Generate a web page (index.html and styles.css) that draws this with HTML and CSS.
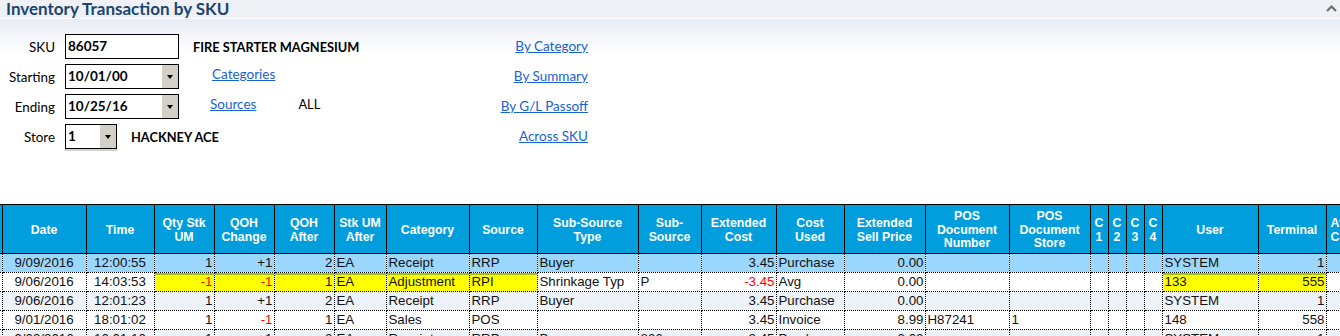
FILE: index.html
```html
<!DOCTYPE html>
<html>
<head>
<meta charset="utf-8">
<link rel="stylesheet" href="styles.css">
</head>
<body>
<div class="titlebar">
  <h1 class="title">Inventory Transaction by SKU</h1>
  <svg class="collapse" width="11" height="8" viewBox="0 0 11 8"><polyline points="1,7 5.5,2.5 10,7" fill="none" stroke="#6f6f6f" stroke-width="2.2"/></svg>
</div>
<div class="panel">
  <div class="form">
    <div class="fields">
      <div class="row">
        <span class="label">SKU</span>
        <div class="box box-sku"><span class="val">86057</span></div>
        <span class="desc desc-sku">FIRE STARTER MAGNESIUM</span>
      </div>
      <div class="row">
        <span class="label">Starting</span>
        <div class="box box-date"><span class="val">10/01/00</span><span class="drop"><i class="arrow"></i></span></div>
        <a class="link link-cat" href="#">Categories</a>
      </div>
      <div class="row">
        <span class="label">Ending</span>
        <div class="box box-date"><span class="val">10/25/16</span><span class="drop"><i class="arrow"></i></span></div>
        <a class="link link-src" href="#">Sources</a>
        <span class="all">ALL</span>
      </div>
      <div class="row">
        <span class="label">Store</span>
        <div class="box box-store"><span class="val">1</span><span class="drop"><i class="arrow"></i></span></div>
        <span class="desc desc-store">HACKNEY ACE</span>
      </div>
    </div>
    <div class="links">
      <a class="link" href="#">By Category</a>
      <a class="link" href="#">By Summary</a>
      <a class="link" href="#">By G/L Passoff</a>
      <a class="link" href="#">Across SKU</a>
    </div>
  </div>
  <table class="grid">
    <colgroup>
      <col class="w2"><col class="w84"><col class="w68"><col class="w60"><col class="w60"><col class="w60"><col class="w52"><col class="w83"><col class="w68"><col class="w101"><col class="w63"><col class="w75"><col class="w68"><col class="w81"><col class="w84"><col class="w81"><col class="w18"><col class="w18"><col class="w18"><col class="w18"><col class="w96"><col class="w68"><col class="w40">
    </colgroup>
    <thead>
      <tr>
        <th class="first"></th>
        <th>Date</th><th>Time</th><th>Qty Stk UM</th><th>QOH Change</th><th>QOH After</th><th class="narrow">Stk UM After</th><th>Category</th><th>Source</th><th>Sub-Source Type</th><th>Sub-<br>Source</th><th>Extended Cost</th><th>Cost Used</th><th>Extended Sell Price</th><th>POS Document Number</th><th>POS Document Store</th><th class="cn">C 1</th><th class="cn">C 2</th><th class="cn">C 3</th><th class="cn">C 4</th><th>User</th><th>Terminal</th><th class="last">Avg Cost</th>
      </tr>
    </thead>
    <tbody>
      <tr class="sel">
        <td class="first"></td>
        <td class="c">9/09/2016</td><td class="c">12:00:55</td><td class="r">1</td><td class="r">+1</td><td class="r">2</td><td>EA</td><td>Receipt</td><td>RRP</td><td>Buyer</td><td></td><td class="r">3.45</td><td>Purchase</td><td class="r">0.00</td><td></td><td></td><td></td><td></td><td></td><td></td><td>SYSTEM</td><td class="r">1</td><td></td>
      </tr>
      <tr>
        <td class="first"></td>
        <td class="c">9/06/2016</td><td class="c">14:03:53</td><td class="r hl neg">-1</td><td class="r hl neg">-1</td><td class="r hl">1</td><td class="hl">EA</td><td class="hl">Adjustment</td><td class="hl">RPI</td><td>Shrinkage Typ</td><td>P</td><td class="r neg">-3.45</td><td>Avg</td><td class="r">0.00</td><td></td><td></td><td></td><td></td><td></td><td></td><td class="hl">133</td><td class="r hl">555</td><td></td>
      </tr>
      <tr class="alt">
        <td class="first"></td>
        <td class="c">9/06/2016</td><td class="c">12:01:23</td><td class="r">1</td><td class="r">+1</td><td class="r">2</td><td>EA</td><td>Receipt</td><td>RRP</td><td>Buyer</td><td></td><td class="r">3.45</td><td>Purchase</td><td class="r">0.00</td><td></td><td></td><td></td><td></td><td></td><td></td><td>SYSTEM</td><td class="r">1</td><td></td>
      </tr>
      <tr>
        <td class="first"></td>
        <td class="c">9/01/2016</td><td class="c">18:01:02</td><td class="r">1</td><td class="r neg">-1</td><td class="r">1</td><td>EA</td><td>Sales</td><td>POS</td><td></td><td></td><td class="r">3.45</td><td>Invoice</td><td class="r">8.99</td><td>H87241</td><td>1</td><td></td><td></td><td></td><td></td><td>148</td><td class="r">558</td><td></td>
      </tr>
      <tr class="alt">
        <td class="first"></td>
        <td class="c">9/02/2016</td><td class="c">10:01:10</td><td class="r">1</td><td class="r">+1</td><td class="r">2</td><td>EA</td><td>Receipt</td><td>RRP</td><td>Buyer</td><td>806</td><td class="r">3.45</td><td>Purchase</td><td class="r">0.00</td><td></td><td></td><td></td><td></td><td></td><td></td><td>SYSTEM</td><td class="r">1</td><td></td>
      </tr>
    </tbody>
  </table>
</div>
</body>
</html>
```

FILE: styles.css
```css
html, body {
  margin: 0;
  padding: 0;
  background: #ffffff;
  overflow: hidden;
  width: 1340px;
  height: 336px;
}

body {
  font-family: "Lato", "Liberation Sans", sans-serif;
  color: #000;
}

.titlebar {
  height: 18px;
  background: #eff1f7;
  border-bottom: 1px solid #ffffff;
  display: flex;
  align-items: center;
  justify-content: space-between;
  padding: 0 3px 0 6px;
}

.title {
  margin: 0;
  font-size: 17px;
  font-weight: 700;
  color: #1a4670;
  line-height: 18px;
}

.collapse {
  display: block;
  margin-bottom: 2px;
}

.panel {
  background: linear-gradient(to bottom, #e8ecf5 0px, #ffffff 34px, #ffffff 100%);
  padding-top: 15px;
}

.form {
  display: flex;
  height: 115px;
}

.fields {
  width: 400px;
  display: flex;
  flex-direction: column;
  gap: 5px;
}

.row {
  display: flex;
  align-items: center;
  height: 25px;
}

.label {
  width: 55px;
  text-align: right;
  font-size: 13.4px;
  margin-right: 10px;
}

.box {
  box-sizing: border-box;
  height: 25px;
  border: 1px solid #000;
  background: #fff;
  display: flex;
  align-items: stretch;
}

.box-sku { width: 114px; }
.box-date { width: 114px; }
.box-store { width: 52px; box-shadow: 0 2px 0 #d6d3ce; }

.val {
  flex: 1;
  font-weight: 700;
  font-size: 13.5px;
  line-height: 23px;
  padding-left: 2px;
}

.drop {
  width: 16px;
  background: #d4d0c8;
  display: flex;
  align-items: center;
  justify-content: center;
}

.arrow {
  width: 0;
  height: 0;
  border-left: 3.5px solid transparent;
  border-right: 3.5px solid transparent;
  border-top: 4px solid #000;
}

.desc {
  font-weight: 700;
  font-size: 12.8px;
}

.desc-sku { margin-left: 14px; }
.desc-store { margin-left: 14px; }

.link {
  color: #1862d2;
  text-decoration: underline;
  font-size: 13.5px;
}

.link-cat { margin-left: 33px; margin-top: -6px; }
.link-src { margin-left: 31px; margin-top: -6px; }

.all {
  margin-left: 42px;
  font-size: 12.8px;
  margin-top: -6px;
}

.links {
  width: 188px;
  display: flex;
  flex-direction: column;
  align-items: flex-end;
  gap: 5px;
}

.links .link {
  height: 25px;
  line-height: 25px;
}

.grid {
  margin-top: 55px;
  border-collapse: collapse;
  table-layout: fixed;
  width: 1366px;
  font-family: "Liberation Sans", Arial, sans-serif;
}

.w2 { width: 2px; }
.w18 { width: 18px; }
.w40 { width: 40px; }
.w52 { width: 52px; }
.w60 { width: 60px; }
.w63 { width: 63px; }
.w68 { width: 68px; }
.w75 { width: 75px; }
.w81 { width: 81px; }
.w83 { width: 83px; }
.w84 { width: 84px; }
.w96 { width: 96px; }
.w101 { width: 101px; }

.grid th {
  box-sizing: border-box;
  background: #009edc;
  color: #ffffff;
  font-size: 12.3px;
  font-weight: 700;
  line-height: 13.5px;
  height: 49px;
  border: 1px solid #000;
  padding: 3px 5px 0;
  text-align: center;
  vertical-align: middle;
  overflow: hidden;
}

.grid th.narrow { padding: 3px 2px 0; }
.grid th.cn { padding: 3px 0 0; }
.grid th.last { padding: 3px 0 0 4px; text-align: left; }

.grid th.first,
.grid td.first {
  border-left: none;
  padding: 0;
}

.grid td {
  font-size: 13.3px;
  height: 18px;
  line-height: 18px;
  padding: 0 1px 0 2px;
  border: 1px dotted #000;
  white-space: nowrap;
  overflow: hidden;
  color: #111;
  vertical-align: middle;
}

.grid td.c { text-align: center; padding: 0; }
.grid td.r { text-align: right; }

.grid tr.sel td { background: #9bd6fd; }
.grid tr.alt td { background: #eef2f9; }

.grid td.hl {
  background: #ffff00;
  box-shadow: inset 0 2px 0 #9ec41c;
}

.grid td.neg { color: #ff0000; }
```
